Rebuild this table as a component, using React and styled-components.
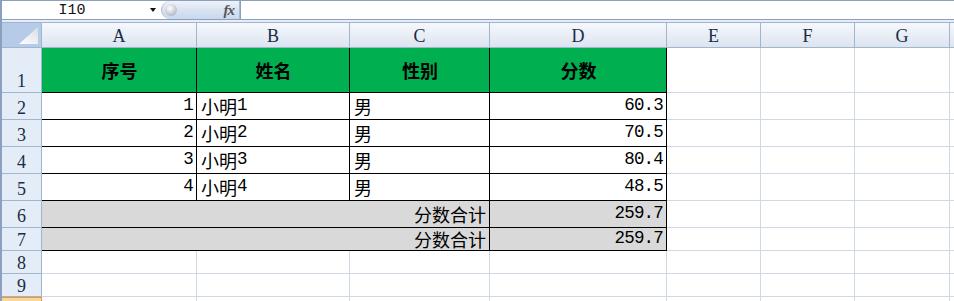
import React from 'react';
import styled, { createGlobalStyle } from 'styled-components';

const GlobalStyle = createGlobalStyle`
  html, body { margin: 0; padding: 0; background: #ffffff; overflow: hidden; }
  * { box-sizing: border-box; }
`;

const GRID = '#d0d7e5';
const HEAD_LINE = '#9eb6ce';
const FRAME = '#8ba0bc';

const Frame = styled.div`
  width: 954px;
  height: 301px;
  overflow: hidden;
  border-left: 2px solid ${FRAME};
  background: #ffffff;
  display: flex;
  flex-direction: column;
`;

const FormulaBar = styled.div`
  height: 20px;
  flex: none;
  display: flex;
  border-top: 1px solid ${FRAME};
  border-bottom: 1px solid ${FRAME};
  background: #ffffff;
`;

const NameBox = styled.div`
  width: 158px;
  display: flex;
  align-items: center;
`;

const NameText = styled.span`
  flex: 1;
  text-align: center;
  font-family: "Liberation Mono", monospace;
  font-size: 15px;
  color: #111;
  padding-right: 8px;
`;

const DropArrow = styled.span`
  width: 0;
  height: 0;
  margin-right: 4px;
  border-left: 3px solid transparent;
  border-right: 3px solid transparent;
  border-top: 4px solid #111;
`;

const FxPill = styled.div`
  width: 79px;
  margin-left: 1px;
  display: flex;
  align-items: center;
  justify-content: space-between;
  border-radius: 9px 0 0 9px;
  border: 1px solid #a8bad2;
  border-top: none;
  border-bottom: none;
  background: linear-gradient(#eef3fa, #d7e2f1 55%, #c9d8ec);
  padding: 0 5px 0 3px;
`;

const FxBall = styled.span`
  width: 12px;
  height: 12px;
  border-radius: 50%;
  background: radial-gradient(circle at 40% 35%, #ffffff, #c9ccd2 55%, #9aa2ad);
`;

const FxLabel = styled.span`
  font-family: "Liberation Serif", serif;
  font-style: italic;
  font-weight: bold;
  font-size: 15px;
  color: #555;
  letter-spacing: -1px;
`;

const FormulaInput = styled.div`
  flex: 1;
  border-left: 1px solid ${FRAME};
  background: #ffffff;
`;

const Spacer = styled.div`
  height: 2px;
  flex: none;
  background: #e7edf6;
`;

const Sheet = styled.div`
  flex: none;
  display: grid;
  grid-template-columns: 40px 155px 153px 140px 177px 94px 94px 95px 1fr;
  grid-template-rows: 26px 45px repeat(5, 27px) 23px 23px 23px 23px;
`;

const Corner = styled.div`
  background: #b6cbe7;
  border-top: 1px solid ${HEAD_LINE};
  border-right: 1px solid ${HEAD_LINE};
  border-bottom: 1px solid ${HEAD_LINE};
  display: flex;
  align-items: flex-end;
  justify-content: flex-end;
  padding: 0 3px 3px 0;
`;

const ColHead = styled.div`
  background: linear-gradient(#f6f8fc, #e9eef6 50%, #dce4ef);
  border-top: 1px solid ${HEAD_LINE};
  border-right: 1px solid ${HEAD_LINE};
  border-bottom: 1px solid ${HEAD_LINE};
  display: flex;
  align-items: center;
  justify-content: center;
  font-family: "Liberation Serif", serif;
  font-size: 18px;
  color: #1b2d45;
  padding-top: 2px;
`;

const RowHead = styled.div`
  background: ${p => (p.$selected ? 'linear-gradient(#f9d99f, #f1c15f)' : '#e4ecf7')};
  border-right: 1px solid ${p => (p.$selected ? '#f29536' : HEAD_LINE)};
  border-bottom: 1px solid ${HEAD_LINE};
  border-top: ${p => (p.$selected ? '1px solid #f29536' : 'none')};
  display: flex;
  align-items: flex-end;
  justify-content: center;
  font-family: "Liberation Serif", serif;
  font-size: 18px;
  line-height: 20px;
  color: #1b2d45;
  padding-bottom: ${p => (p.$short ? '0' : '1px')};
`;

const fills = { green: '#00b050', gray: '#d9d9d9', none: '#ffffff' };

const Cell = styled.div`
  grid-column: span ${p => p.$span || 1};
  background: ${p => fills[p.$fill || 'none']};
  border-right: 1px solid ${p => (p.$boxed ? '#000' : GRID)};
  border-bottom: 1px solid ${p => (p.$boxed ? '#000' : GRID)};
  display: flex;
  align-items: center;
  justify-content: ${p => ({ left: 'flex-start', right: 'flex-end', center: 'center' }[p.$align || 'left'])};
  padding: 0 3px 0 4px;
  font-family: "Noto Sans CJK SC", sans-serif;
  font-size: 18px;
  font-weight: ${p => (p.$bold ? 700 : 400)};
  line-height: 22px;
  color: #000;
  white-space: nowrap;
`;

const Num = styled.span`
  font-family: "Liberation Mono", monospace;
  font-size: 17.5px;
  letter-spacing: -0.8px;
  position: relative;
  top: -1px;
`;

const CornerMark = () => (
  <svg width="19" height="17" viewBox="0 0 19 17">
    <defs>
      <linearGradient id="cornerShade" x1="0" y1="1" x2="1" y2="0">
        <stop offset="0" stopColor="#ffffff" />
        <stop offset="1" stopColor="#d9dee6" />
      </linearGradient>
    </defs>
    <polygon points="0,17 19,17 19,0" fill="url(#cornerShade)" />
  </svg>
);

const people = [
  { id: 1, name: '小明', tag: '1', sex: '男', score: '60.3' },
  { id: 2, name: '小明', tag: '2', sex: '男', score: '70.5' },
  { id: 3, name: '小明', tag: '3', sex: '男', score: '80.4' },
  { id: 4, name: '小明', tag: '4', sex: '男', score: '48.5' },
];

const columns = ['A', 'B', 'C', 'D', 'E', 'F', 'G', ''];
const blanks = n => Array.from({ length: n }, (_, i) => <Cell key={`b${i}`} />);

export default function App() {
  return (
    <>
      <GlobalStyle />
      <Frame>
        <FormulaBar>
          <NameBox>
            <NameText>I10</NameText>
            <DropArrow />
          </NameBox>
          <FxPill>
            <FxBall />
            <FxLabel>fx</FxLabel>
          </FxPill>
          <FormulaInput />
        </FormulaBar>
        <Spacer />
        <Sheet>
          <Corner>
            <CornerMark />
          </Corner>
          {columns.map((c, i) => (
            <ColHead key={i}>{c}</ColHead>
          ))}

          <RowHead>1</RowHead>
          {['序号', '姓名', '性别', '分数'].map(t => (
            <Cell key={t} $fill="green" $boxed $bold $align="center">{t}</Cell>
          ))}
          {blanks(4)}

          {people.map(p => (
            <React.Fragment key={p.id}>
              <RowHead>{p.id + 1}</RowHead>
              <Cell $boxed $align="right"><Num>{p.id}</Num></Cell>
              <Cell $boxed>{p.name}<Num>{p.tag}</Num></Cell>
              <Cell $boxed>{p.sex}</Cell>
              <Cell $boxed $align="right"><Num>{p.score}</Num></Cell>
              {blanks(4)}
            </React.Fragment>
          ))}

          {[6, 7].map(r => (
            <React.Fragment key={r}>
              <RowHead $short={r === 7}>{r}</RowHead>
              <Cell $span={3} $fill="gray" $boxed $align="right">分数合计</Cell>
              <Cell $fill="gray" $boxed $align="right"><Num>259.7</Num></Cell>
              {blanks(4)}
            </React.Fragment>
          ))}

          {[8, 9].map(r => (
            <React.Fragment key={r}>
              <RowHead $short>{r}</RowHead>
              {blanks(8)}
            </React.Fragment>
          ))}

          {/* row 10 (the active row) only peeks in at the bottom edge */}
          <RowHead $selected />
          {blanks(8)}
        </Sheet>
      </Frame>
    </>
  );
}
